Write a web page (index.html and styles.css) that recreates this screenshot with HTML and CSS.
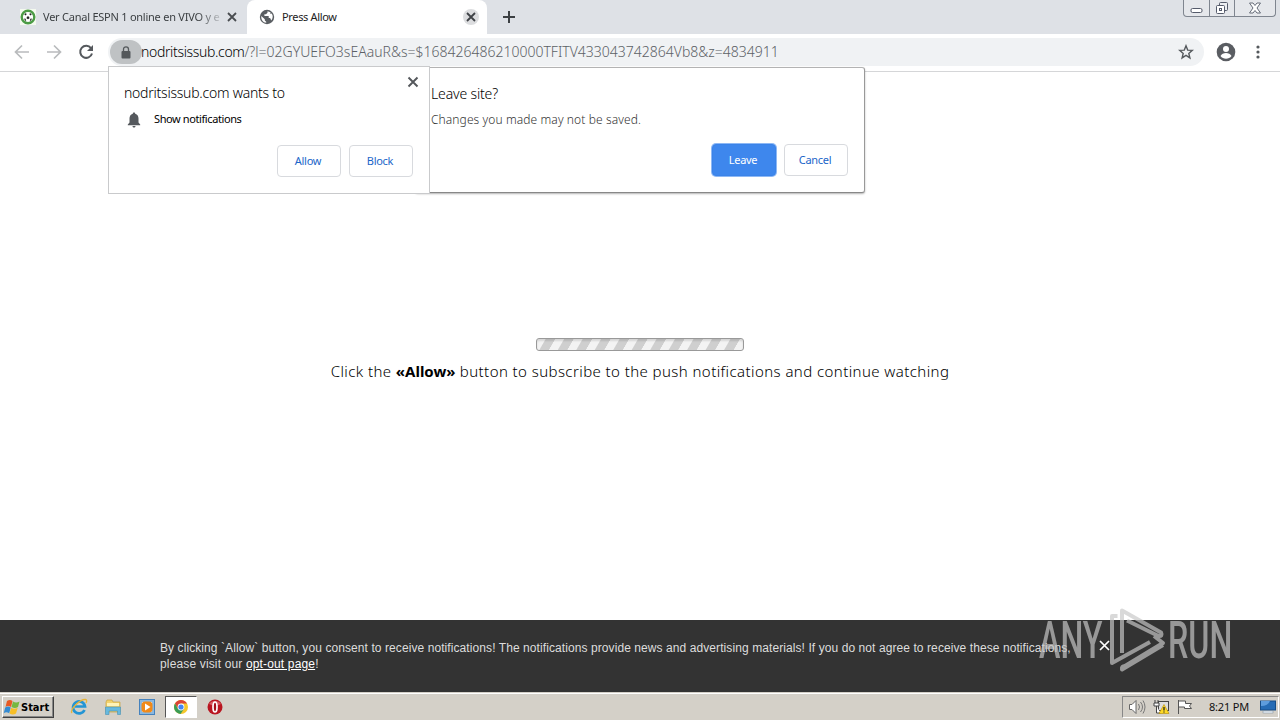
FILE: index.html
```html
<!DOCTYPE html>
<html lang="en">
<head>
    <meta charset="UTF-8">
    <meta name="viewport" content="width=device-width, initial-scale=1.0">
    <title>Press Allow</title>
    <link rel="stylesheet" href="styles.css">
</head>
<body>
    <!-- tabs -->
    <header class="tab-strip">
        <div class="tab">
            <svg class="favicon" width="16" height="16" viewBox="0 0 16 16">
                <rect width="16" height="16" fill="#f4faef"/>
                <circle cx="8" cy="8" r="6.3" fill="#fff" stroke="#4b9b45" stroke-width="2.4"/>
                <path d="M7 7.500h2l.5 1.700L8 10.300 6.500 9.200zM4.300 5.300l1.700-1.200.6 1.300-1.300 1zM10 4.100l1.700 1.200-.9 1.100-1.400-1zM4 9.800l1.300-.3.9 1.700-.8.9zM12 9.800l-1.300-.3-.9 1.700.8.9z" fill="#222"/>
            </svg>
            <span class="tab-title first">Ver Canal ESPN 1 online en VIVO y e</span>
            <svg class="tab-close" width="16" height="16" viewBox="0 0 16 16"><path d="M4 4l8 8M12 4l-8 8" stroke="#494c50" stroke-width="1.8"/></svg>
        </div>
        <div class="tab active">
            <svg class="favicon" width="16" height="16" viewBox="0 0 16 16">
                <circle cx="8" cy="8" r="7.2" fill="#5a5e62"/>
                <path d="M2.3 7l3.5 3.3v1.2l1.4 1.2v1.1C4 13.500 2 11 2.300 7zM8.500 2.200v1.600L7 5.200H5.400v1.700h4.300v2.200h1.400l1.200 2.300c1.700-2 2-5 .4-7L11.400 5V3.200z" fill="#fff"/>
            </svg>
            <span class="tab-title second">Press Allow</span>
            <svg class="tab-close" width="16" height="16" viewBox="0 0 16 16"><circle cx="8" cy="8" r="8" fill="#dcdddf"/><path d="M4 4l8 8M12 4l-8 8" stroke="#3f4246" stroke-width="1.8"/></svg>
        </div>
        <svg class="new-tab" width="14" height="14" viewBox="0 0 14 14"><path d="M7 1v12M1 7h12" stroke="#3c4043" stroke-width="2"/></svg>
        <div class="window-buttons">
            <span><svg width="13" height="16" viewBox="0 0 13 16"><rect x="1" y="8.500" width="11" height="4" rx="1.500" fill="#fff" stroke="#555b6b"/></svg></span>
            <span><svg width="14" height="16" viewBox="0 0 14 16"><rect x="4.500" y="2.500" width="8" height="8" rx="1" fill="#eceef1" stroke="#555b6b"/><rect x="1.500" y="5.500" width="8" height="8" rx="1" fill="#fff" stroke="#555b6b"/><rect x="4.500" y="8.500" width="2" height="2" fill="#fff" stroke="#555b6b"/></svg></span>
            <span><svg width="14" height="16" viewBox="0 0 14 16"><path d="M1.500 3h3.500l2 2.500L9 3h3.500L9 8l3.500 5H9l-2-2.500L5 13H1.500L5 8z" fill="#fff" stroke="#666c79"/></svg></span>
        </div>
    </header>

    <!-- address bar -->
    <nav class="toolbar">
        <svg class="nav-icon" width="16" height="16" viewBox="0 0 16 16"><path d="M15 8H2M8 1.500L1.500 8 8 14.500" fill="none" stroke="#b9bbbd" stroke-width="1.700"/></svg>
        <svg class="nav-icon" width="16" height="16" viewBox="0 0 16 16"><path d="M1 8h13M8 1.500L14.500 8 8 14.500" fill="none" stroke="#b9bbbd" stroke-width="1.700"/></svg>
        <svg class="nav-icon" width="16" height="16" viewBox="0 0 16 16"><path d="M13 4.200A6 6 0 1 0 14 9.500" fill="none" stroke="#55595d" stroke-width="2"/><path d="M15 1v6H9z" fill="#55595d"/></svg>
        <div class="omnibox">
            <span class="lock"><svg width="10" height="13" viewBox="0 0 10 13"><rect x=".5" y="5" width="9" height="7.500" rx="1" fill="#55595c"/><path d="M2.500 5V3.300a2.500 2.500 0 0 1 5 0V5" fill="none" stroke="#55595c" stroke-width="1.300"/></svg></span>
            <span class="url"><b>nodritsissub.com</b><i>/?l=02GYUEFO3sEAauR&amp;s=$168426486210000TFITV433043742864Vb8&amp;z=4834911</i></span>
            <svg class="star" width="16" height="16" viewBox="0 0 16 16"><path d="M8 1.800l1.700 4.300 4.600.3-3.500 3 1.100 4.500L8 11.400l-3.900 2.500 1.100-4.500-3.500-3 4.600-.3z" fill="none" stroke="#55595d" stroke-width="1.400"/></svg>
        </div>
        <svg class="profile" width="20" height="20" viewBox="0 0 20 20"><circle cx="10" cy="10" r="9.300" fill="#5a5d62"/><circle cx="10" cy="7" r="3" fill="#fff"/><path d="M4.500 14c1.800-4 9.200-4 11 0-2.500 3.600-8.500 3.600-11 0z" fill="#fff"/></svg>
        <svg class="menu" width="4" height="16" viewBox="0 0 4 16" fill="#55595d"><circle cx="2" cy="3" r="1.600"/><circle cx="2" cy="8" r="1.600"/><circle cx="2" cy="13" r="1.600"/></svg>
    </nav>

    <!-- page -->
    <main class="page">
        <div class="progress"></div>
        <p class="hint">Click the <strong>«Allow»</strong> button to subscribe to the push notifications and continue watching</p>
    </main>

    <footer class="consent">
        <p><span class="line-one">By clicking `Allow` button, you consent to receive notifications! The notifications provide news and advertising materials! If you do not agree to receive these notifications,</span><br><span class="line-two">please visit our <a href="#">opt-out page</a>!</span></p>
        <svg class="consent-close" width="11" height="11" viewBox="0 0 11 11"><path d="M1 1l9 9M10 1l-9 9" stroke="#fff" stroke-width="1.700"/></svg>
    </footer>

    <!-- taskbar -->
    <div class="taskbar">
        <div class="start">
            <svg width="18" height="17" viewBox="0 0 18 17"><path d="M4 2q3-2 5.500 0L8 8q-3-2-5.500 0z" fill="#e85a24"/><path d="M10 2.500q3 2 6.500 0L15 8q-3 2-6.500 0z" fill="#76b83f"/><path d="M2.200 8.500q3-2 5.500 0L6.200 14.300q-3-2-5.500 0z" fill="#358bd2"/><path d="M8.200 8.800q3 2 6.500 0L13 14.500q-3 2-6.500 0z" fill="#f7be25"/></svg>
            <span>Start</span>
        </div>
        <div class="launch">
            <span class="app"><svg width="18" height="18" viewBox="0 0 18 18"><path d="M14.500 12A6 6 0 1 1 15 8.500H5" fill="none" stroke="#2495d4" stroke-width="2.700"/><path d="M2 15C-1 12 10 1 15.500 1.500c2 .3 1 2.500.5 3.500" fill="none" stroke="#e8b437" stroke-width="1.300"/></svg></span>
            <span class="app"><svg width="18" height="18" viewBox="0 0 18 18"><path d="M2 4l1-2h5l1 2h7v10H2z" fill="#f2d26e" stroke="#c9a33f" stroke-width=".7"/><path d="M3 5h12v3H3z" fill="#fff3b8"/><path d="M1.500 9h15v7.500h-3V13H5v3.500H1.500z" fill="#67b9de" stroke="#4790b5" stroke-width=".6"/></svg></span>
            <span class="app"><svg width="18" height="18" viewBox="0 0 18 18"><rect x="1.500" y="1.500" width="15" height="15" fill="#8bb8df" stroke="#4582bd"/><rect x="4" y="4" width="10" height="10" fill="#fff"/><rect x="3.500" y="3.500" width="11" height="11" rx="3.500" fill="#f18a19"/><path d="M7 5.500l5.500 3.500L7 12.500z" fill="#fff"/></svg></span>
            <span class="app current"><svg width="14" height="14" viewBox="0 0 14 14"><circle cx="7" cy="7" r="7" fill="#f5c72c"/><path d="M1 3.500A7 7 0 0 1 13 3.500H7L4 8.500z" fill="#db4437"/><path d="M1 3.500A7 7 0 0 0 6.500 14L10 9H4z" fill="#3a9c56"/><circle cx="7" cy="7" r="3.400" fill="#fff"/><circle cx="7" cy="7" r="2.600" fill="#4285f4"/></svg></span>
            <span class="app"><svg width="16" height="16" viewBox="0 0 16 16"><circle cx="8" cy="8" r="7.500" fill="#b91520"/><path d="M2 5a7 6 0 0 1 12 0q-6 3-12 0z" fill="#d75a60"/><ellipse cx="8" cy="8" rx="2" ry="5" fill="#a40e18" stroke="#fff" stroke-width="1.700"/></svg></span>
        </div>
        <div class="tray">
            <svg width="18" height="16" viewBox="0 0 18 16"><path d="M1.500 5.500H4l4-4v13l-4-4H1.500z" fill="#fff" stroke="#666"/><path d="M10.500 5q2 3 0 6M12.500 3q4 5 0 10M15 1.500q4 6.500 0 13" fill="none" stroke="#777"/></svg>
            <svg width="17" height="16" viewBox="0 0 17 16"><rect x="5.500" y="2.500" width="10" height="9" fill="#ddd" stroke="#444"/><path d="M2 1v3M5 1v3M1 4h5v3H1zM3.500 7v7h4" fill="#fff" stroke="#444"/><path d="M11 5.500l5 9H6z" fill="#ffda25" stroke="#b58b00" stroke-width=".6"/><path d="M11 8v3.500M11 12.500v1" stroke="#222" stroke-width="1.300"/></svg>
            <svg width="16" height="16" viewBox="0 0 16 16"><path d="M1.500 1v14M1.500 2h7v2.500h6l-2 2.500 2 2.500h-7V8h-6z" fill="#fff" stroke="#555"/></svg>
            <time>8:21 PM</time>
            <svg class="show-desktop" width="16" height="14" viewBox="0 0 16 14"><rect x=".5" y="1" width="15" height="9" fill="#266cb5" stroke="#174d86"/><path d="M1 6q7 0 9-5H1z" fill="#5e9ddd"/><rect x="3" y="11" width="10" height="2" fill="#eef4fa" stroke="#789" stroke-width=".5"/></svg>
        </div>
    </div>

    <!-- popups over the page -->
    <section class="dialog leave-dialog">
        <h2>Leave site?</h2>
        <p>Changes you made may not be saved.</p>
        <div class="actions"><button class="primary">Leave</button><button>Cancel</button></div>
    </section>

    <section class="dialog permission">
        <svg class="close" width="12" height="12" viewBox="0 0 12 12"><path d="M1.500 1.500l9 9M10.500 1.500l-9 9" stroke="#54575b" stroke-width="1.900"/></svg>
        <h2>nodritsissub.com wants to</h2>
        <div class="request">
            <svg width="14" height="16" viewBox="0 0 14 16" fill="#55595d"><path d="M7 .5c.8 0 1.200.5 1.200 1.200C10.600 2.300 11.500 4.500 11.500 6.500v4l1.700 2v.8H.8v-.8l1.700-2v-4c0-2 .9-4.200 3.300-4.800C5.800 1 6.200.5 7 .5zM5.500 14h3c0 2-3 2-3 0z"/></svg>
            <span>Show notifications</span>
        </div>
        <div class="actions"><button>Allow</button><button>Block</button></div>
    </section>

    <!-- watermark -->
    <div class="watermark">
        <span class="any">ANY</span>
        <svg width="58" height="66" viewBox="0 0 58 66">
            <path d="M9.500 9H4v47l38-21M14 46V3.500l39 22q2 4-2.500 3.500L19 13.500M46 29l9 7-38 23q-3.500 0-3 3.500l41-24.500" fill="none" stroke="#c8c8c8" stroke-opacity=".68" stroke-width="4" stroke-linejoin="round"/>
        </svg>
        <span class="run">RUN</span>
    </div>
</body>
</html>
```
FILE: styles.css
```css
* {
    box-sizing: border-box;
}

body {
    margin: 0;
    width: 1280px;
    height: 720px;
    display: flex;
    flex-direction: column;
    position: relative;
    overflow: hidden;
    background: #fff;
    color: #111;
    font-family: "Noto Sans", sans-serif;
}

svg {
    display: block;
    flex: none;
}

h2,
p {
    margin: 0;
    font-weight: 400;
}

.tab-strip {
    height: 34px;
    flex: none;
    display: flex;
    background: #dee1e6;
}

.tab {
    width: 247px;
    height: 34px;
    padding: 0 8px 0 20px;
    display: flex;
    align-items: center;
    color: #3c4043;
    font-size: 11px;
}

.tab.active {
    width: 240px;
    padding-left: 12px;
    background: #fff;
    border-radius: 8px 8px 0 0;
    color: #222;
}

.tab-title {
    margin: -2px 0 0 7px;
    flex: 1;
    white-space: nowrap;
}

.tab-title.first {
    letter-spacing: -0.24px;
    -webkit-mask-image: linear-gradient(to right, #000 155px, transparent 182px);
}

.tab-title.second {
    letter-spacing: -0.35px;
}

.tab:first-child .tab-close {
    margin-right: -1px;
}

.new-tab {
    margin: 10px 0 0 15px;
}

.window-buttons {
    margin: 0 4px 0 auto;
    width: 93px;
    height: 17px;
    display: flex;
    border: 1px solid #7f858f;
    border-top: 0;
    border-radius: 0 0 4px 4px;
    background: #e5e7eb;
}

.window-buttons span {
    width: 25px;
    display: flex;
    justify-content: center;
}

.window-buttons span + span {
    border-left: 1px solid #7f858f;
}

.window-buttons span:last-child {
    flex: 1;
}

.toolbar {
    height: 38px;
    flex: none;
    display: flex;
    align-items: center;
    padding: 0 19px 1px 14px;
    border-bottom: 1px solid #d5d6d8;
}

.nav-icon {
    margin-right: 16px;
}

.omnibox {
    width: 1096px;
    height: 28px;
    margin-left: -2px;
    display: flex;
    align-items: center;
    border-radius: 14px;
    background: #f0f2f4;
}

.lock {
    width: 32px;
    height: 24px;
    margin-left: 2px;
    display: flex;
    align-items: center;
    justify-content: center;
    border-radius: 12px;
    background: #bfc2c4;
}

.url {
    flex: 1;
    margin: -1px 0 0 -1px;
    font-size: 14px;
    font-weight: 300;
    white-space: nowrap;
    color: #5c6166;
}

.url b,
.url i {
    font-weight: inherit;
    font-style: normal;
}

.url b {
    color: #000;
    letter-spacing: -0.35px;
}

.star {
    margin-right: 10px;
}

.profile {
    margin-left: 12px;
}

.menu {
    margin-left: 20px;
}

.page {
    height: 548px;
    display: flex;
    flex-direction: column;
    align-items: center;
    padding-top: 266px;
}

.progress {
    width: 208px;
    height: 13px;
    border: 1px solid #999;
    border-radius: 3px;
    background: repeating-linear-gradient(120deg, #f3f3f3 0 7px, #cfcfcf 8px 15.500px, #f3f3f3 16px);
    box-shadow: inset 0 2px 2px rgba(0, 0, 0, 0.12);
}

.hint {
    margin-top: 9px;
    color: #000;
    font-size: 15px;
    font-weight: 300;
    line-height: 22px;
    letter-spacing: 0.42px;
    white-space: nowrap;
}

.hint strong {
    font-weight: 700;
    letter-spacing: 0;
}

.consent {
    height: 72px;
    padding: 20px 160px 0;
    display: flex;
    background: #333;
    color: #ddd;
    font: 12px/16px "Liberation Sans", sans-serif;
}

.consent p {
    width: 944px;
    white-space: nowrap;
}

.consent a {
    color: #fff;
}

.line-one {
    letter-spacing: 0.083px;
}

.line-two {
    letter-spacing: 0.15px;
}

.consent-close {
    margin: 0 0 0 -5px;
}

.taskbar {
    height: 28px;
    display: flex;
    align-items: center;
    padding: 1px 0 0 2px;
    border-top: 1px solid #d4d0c8;
    box-shadow: inset 0 1px #fff;
    background: #d4d0c8;
}

.start {
    width: 52px;
    height: 22px;
    display: flex;
    align-items: center;
    border: 1px solid;
    border-color: #fff #404040 #404040 #fff;
    box-shadow: inset -1px -1px #888;
    color: #000;
    font: bold 11px "DejaVu Sans Condensed", sans-serif;
}

.launch {
    margin-left: 8px;
    display: flex;
}

.app {
    width: 34px;
    height: 22px;
    display: flex;
    align-items: center;
    justify-content: center;
}

.current {
    width: 32px;
    margin: 0 1px;
    border: 1px solid;
    border-color: #555 #fff #fff #555;
    background: #fff;
}

.tray {
    width: 157px;
    height: 22px;
    margin-left: auto;
    margin-right: 1px;
    padding-left: 5px;
    display: flex;
    align-items: center;
    gap: 7px;
    border: 1px solid;
    border-color: #888 #fff #fff #888;
}

.tray time {
    margin: -1px 0 0 9px;
    font-size: 11px;
    letter-spacing: -0.2px;
    white-space: nowrap;
}

.show-desktop {
    margin-left: 4px;
}

.dialog {
    position: absolute;
    background: #fff;
    border: 1px solid #c9cacc;
}

.dialog h2 {
    color: #000;
    font-size: 14px;
    font-weight: 300;
    line-height: 20px;
}

.actions {
    display: flex;
    justify-content: flex-end;
    gap: 8px;
}

.actions button {
    width: 64px;
    height: 32px;
    padding: 0 2px 2px 0;
    border: 1px solid #d8dade;
    border-radius: 4px;
    background: #fff;
    color: #1b66c9;
    font: 11px "Noto Sans", sans-serif;
    letter-spacing: -0.3px;
}

.actions .primary {
    border-color: #3b83e8;
    background: #3e87ed;
    box-shadow: 0 0 0 1px #8db8f5;
    color: #fff;
}

.leave-dialog {
    left: 415px;
    top: 67px;
    width: 450px;
    height: 126px;
    padding: 16px 16px 0 15px;
    border-color: #b3b3b3 #999 #888 #b3b3b3;
    border-radius: 3px;
    box-shadow: 0 1px 2px rgba(0, 0, 0, 0.3);
}

.leave-dialog h2 {
    letter-spacing: -0.15px;
}

.leave-dialog p {
    margin: 6px 0 14px;
    color: #333;
    font-size: 12px;
    font-weight: 300;
    letter-spacing: 0.1px;
    line-height: 20px;
}

.permission {
    left: 108px;
    top: 66px;
    width: 322px;
    height: 128px;
    padding: 16px 16px 0 15px;
}

.permission h2 {
    letter-spacing: -0.24px;
}

.close {
    position: absolute;
    right: 10px;
    top: 9px;
}

.request {
    margin: 7px 0 15px 3px;
    display: flex;
    align-items: center;
    gap: 13px;
    height: 20px;
    color: #000;
    font-size: 11px;
    letter-spacing: -0.4px;
}

.request span {
    margin-top: -3px;
}

.watermark {
    position: absolute;
    left: 1039px;
    top: 610px;
    width: 193px;
    height: 66px;
    display: flex;
    opacity: 0.68;
    color: #c8c8c8;
    font: 500 52px/62px Roboto, sans-serif;
}

.watermark span {
    transform-origin: left center;
    transform: scaleX(0.62);
}

.any {
    width: 70px;
}

.watermark svg {
    margin: -3px 2px 0 -1px;
}

.watermark path {
    stroke-opacity: 1;
}

.run {
    width: 60px;
}
```
